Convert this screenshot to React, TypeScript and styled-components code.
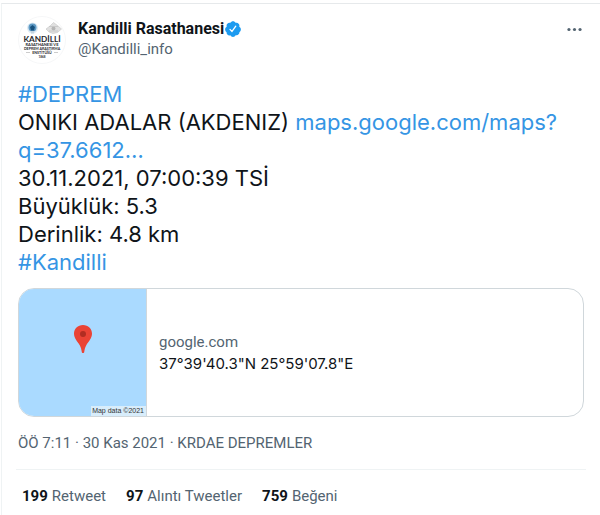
import React from "react";
import styled, { createGlobalStyle } from "styled-components";

const GlobalStyle = createGlobalStyle`
  * { box-sizing: border-box; }
  body {
    margin: 0;
    background: #fff;
    color: #0f1419;
    font-family: Roboto, "Liberation Sans", sans-serif;
    font-size: 15px;
    line-height: 20px;
  }
`;

const Tweet = styled.article`
  margin: 3px 0 0 1px;
  padding: 12px 16px 0;
  border-top: 1px solid #e6e9eb;
  border-left: 1px solid #eff3f4;
`;

const Header = styled.header`
  display: flex;
  align-items: flex-start;
  gap: 12px;
`;

const Avatar = styled.svg`
  flex: none;
  width: 48px;
  height: 48px;
`;

const Author = styled.div`
  flex: 1;
  min-width: 0;
  padding-top: 3px;
`;

const NameRow = styled.div`
  display: flex;
  align-items: center;
`;

const Name = styled.a`
  color: #0f1419;
  font-size: 16px;
  font-weight: 700;
  text-decoration: none;
`;

const Handle = styled.a`
  display: block;
  color: #536471;
  text-decoration: none;
`;

const MoreButton = styled.button`
  display: flex;
  margin-top: 4px;
  padding: 0;
  border: 0;
  background: none;
  color: #536471;
  cursor: pointer;
`;

const Body = styled.div`
  margin-top: 16px;
  font-family: Inter, sans-serif;
  font-size: 22px;
  line-height: 28px;
  overflow-wrap: break-word;
`;

const Line = styled.div``;

const TextLink = styled.a`
  color: #3595e4;
  text-decoration: none;
`;

const LinkCard = styled.a`
  display: flex;
  margin-top: 12px;
  overflow: hidden;
  border: 1px solid #d0d7db;
  border-radius: 16px;
  color: inherit;
  text-decoration: none;
`;

const MapThumb = styled.div`
  display: flex;
  flex: none;
  position: relative;
  width: 128px;
  height: 127px;
  border-right: 1px solid #d0d7db;
  background: #aadaff;
`;

const Pin = styled.svg`
  width: 20px;
  height: 30px;
  margin: 35px 0 0 54px;
`;

const MapCredit = styled.span`
  position: absolute;
  right: 0;
  bottom: 0;
  padding: 0 2px 0 1px;
  background: #d8edfb;
  color: #333;
  font: 7px/10px "Liberation Sans", sans-serif;
`;

const CardText = styled.div`
  display: flex;
  flex: 1;
  flex-direction: column;
  justify-content: center;
  gap: 2px;
  min-width: 0;
  padding: 0 12px;
`;

const Muted = styled.span`
  color: #536471;
`;

const CardTitle = styled.span`
  font-family: Inter, sans-serif;
  font-size: 15px;
`;

const Meta = styled.div`
  padding: 16px 0;
  color: #536471;
`;

const Stats = styled.div`
  display: flex;
  gap: 20px;
  margin: 0 -2px;
  padding: 16px 6px;
  border-top: 1px solid #eff3f4;
`;

const Stat = styled.a`
  display: flex;
  gap: 4px;
  color: #536471;
  text-decoration: none;
`;

const Count = styled.strong`
  color: #0f1419;
  font-weight: 700;
`;

const stats = [
  { count: "199", label: "Retweet" },
  { count: "97", label: "Alıntı Tweetler" },
  { count: "759", label: "Beğeni" },
];

function Logo() {
  return (
    <Avatar viewBox="0 0 48 48" role="img" aria-label="Kandilli Rasathanesi">
      <circle cx="24" cy="24" r="23.5" fill="#fff" stroke="#f6f7f8" />
      <circle cx="14.5" cy="12" r="5.5" fill="#dceaf4" />
      <circle cx="14.5" cy="11.5" r="4" fill="#5e9ac5" />
      <path d="M12 11l2.500-2 2.500 2-1 3.500h-3z" fill="#17527f" />
      <path d="M13 15h3v2.500h-3z" fill="#c3d5e1" />
      <path d="m28 13 4-3 3.500-3.500 4 3 4 3.500-4 3.500-4.500 1-4-1.500z" fill="#e0e0e0" stroke="#c4c4c4" strokeWidth=".6" />
      <circle cx="35.5" cy="12.5" r="2" fill="#b5b5b5" />
      <path d="M31 10.500h9M31 15h9" stroke="#c4c4c4" strokeWidth=".8" />
      <g fill="#28292d" textAnchor="middle" fontFamily="Lato, sans-serif" fontWeight="700">
        <text x="24" y="25.5" fontSize="8.2">KANDİLLİ</text>
        <text x="24" y="30.2" fontSize="4">RASATHANESİ VE</text>
        <text x="24" y="34.2" fontSize="3.6">DEPREM ARAŞTIRMA</text>
        <text x="24" y="38" fontSize="3.6">ENSTİTÜSÜ</text>
        <text x="24" y="41.8" fontSize="3">1868</text>
      </g>
      <path d="M8 36.500h4M36 36.500h4" stroke="#aaa" strokeWidth=".6" />
    </Avatar>
  );
}

function Verified() {
  return (
    <svg width="18" height="18" viewBox="0 0 24 24" role="img" aria-label="Onaylı hesap">
      <path
        fill="#1d9bf0"
        d="M22.5 12.5c0-1.58-.875-2.95-2.148-3.6.154-.435.238-.905.238-1.4 0-2.21-1.71-3.998-3.818-3.998-.47 0-.92.084-1.336.25C14.818 2.415 13.51 1.5 12 1.5s-2.816.917-3.437 2.25c-.415-.165-.866-.25-1.336-.25-2.11 0-3.818 1.79-3.818 4 0 .494.083.964.237 1.4-1.272.65-2.147 2.018-2.147 3.6 0 1.495.782 2.798 1.942 3.486-.02.17-.032.34-.032.514 0 2.21 1.708 4 3.818 4 .47 0 .92-.086 1.335-.25.62 1.334 1.926 2.25 3.437 2.25 1.512 0 2.818-.916 3.437-2.25.415.163.865.248 1.336.248 2.11 0 3.818-1.79 3.818-4 0-.174-.012-.344-.033-.513 1.158-.687 1.943-1.99 1.943-3.484z"
      />
      <path d="m8 12.5 2.7 2.8 5-7" fill="none" stroke="#fff" strokeWidth="1.7" strokeLinecap="round" strokeLinejoin="round" />
    </svg>
  );
}

export default function App() {
  return (
    <>
      <GlobalStyle />
      <Tweet>
        <Header>
          <Logo />
          <Author>
            <NameRow>
              <Name href="#profile">Kandilli Rasathanesi</Name>
              <Verified />
            </NameRow>
            <Handle href="#profile">@Kandilli_info</Handle>
          </Author>
          <MoreButton aria-label="Daha fazla">
            <svg width="19" height="19" viewBox="0 0 24 24" fill="currentColor">
              <circle cx="5" cy="12" r="2" />
              <circle cx="12" cy="12" r="2" />
              <circle cx="19" cy="12" r="2" />
            </svg>
          </MoreButton>
        </Header>
        <Body>
          <Line><TextLink href="#deprem">#DEPREM</TextLink></Line>
          <Line>
            ONIKI ADALAR (AKDENIZ){" "}
            <TextLink href="#map">maps.google.com/maps?<wbr />q=37.6612…</TextLink>
          </Line>
          <Line>30.11.2021, 07:00:39 TSİ</Line>
          <Line>Büyüklük: 5.3</Line>
          <Line>Derinlik: 4.8 km</Line>
          <Line><TextLink href="#kandilli">#Kandilli</TextLink></Line>
        </Body>
        <LinkCard href="#map">
          <MapThumb>
            <Pin viewBox="0 0 20 30" aria-hidden="true">
              <path d="M10 1C4.8 1 1 4.8 1 9.7c0 4.5 3.2 7.4 5.6 11.2 1.3 2.2 1.8 4.3 2.1 6.6.1 1 .5 1.5 1.3 1.5s1.2-.5 1.3-1.5c.3-2.3.8-4.4 2.1-6.6C15.8 17.1 19 14.2 19 9.7 19 4.8 15.2 1 10 1z" fill="#ea4335" />
              <circle cx="10" cy="10" r="3" fill="#b12d22" />
            </Pin>
            <MapCredit>Map data ©2021</MapCredit>
          </MapThumb>
          <CardText>
            <Muted>google.com</Muted>
            <CardTitle>37°39'40.3"N 25°59'07.8"E</CardTitle>
          </CardText>
        </LinkCard>
        <Meta>ÖÖ 7:11 · 30 Kas 2021 · KRDAE DEPREMLER</Meta>
        <Stats>
          {stats.map((item) => (
            <Stat href="#stats" key={item.label}>
              <Count>{item.count}</Count>
              <span>{item.label}</span>
            </Stat>
          ))}
        </Stats>
      </Tweet>
    </>
  );
}
